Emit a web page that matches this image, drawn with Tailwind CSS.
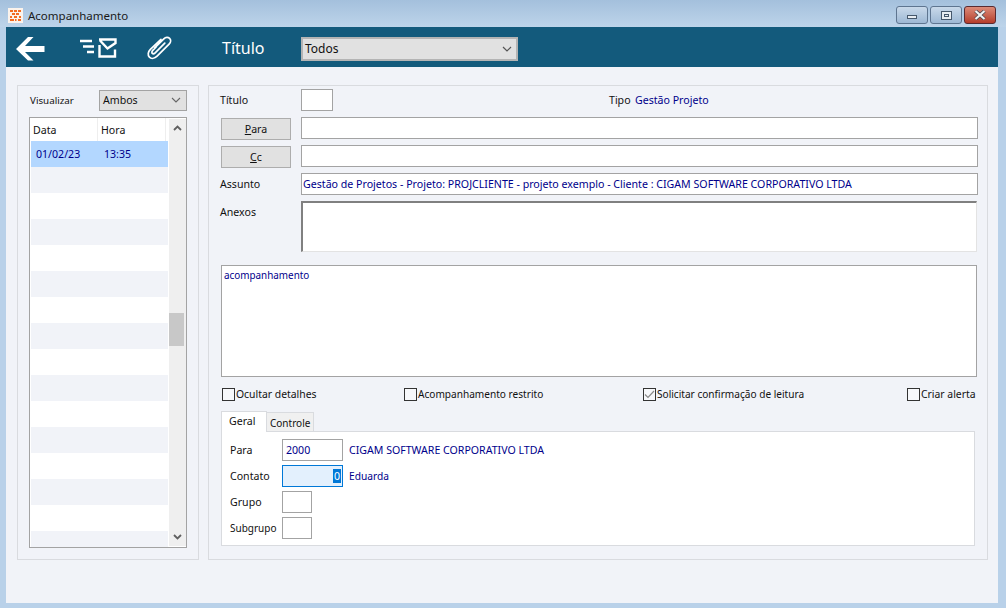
<!DOCTYPE html>
<html lang="pt-BR">
<head>
    <meta charset="UTF-8">
    <title>Acompanhamento</title>
    <script src="https://cdn.jsdelivr.net/npm/@tailwindcss/browser@4"></script>
</head>
<body class="w-[1006px] h-[608px] overflow-hidden bg-[#b9d1e9] font-['Noto_Sans','Open_Sans',sans-serif] text-[10.6px] leading-[14px] text-[#111] whitespace-nowrap">
    <!-- Title bar -->
    <div class="h-[27px] flex items-center bg-gradient-to-b from-[#a4c0dc] to-[#bdd4ea] pl-[8px] pr-[10px]">
        <div class="w-[15px] h-[15px] mt-[3px] bg-[#fbf3ec] flex items-center justify-center">
            <svg width="11" height="11" viewBox="0 0 11 11" fill="#f26b21"><path d="M0 0h3v2H0zM4 0h3v2H4zM8 0h3v2H8zM2 3h3v2H2zM6 3h3v2H6zM0 6h2v2H0zM4 6h3v2H4zM9 6h2v2H9zM0 9h4v2H0zM5 9h1.500v2H5zM8 9h3v2H8z"/></svg>
        </div>
        <span class="ml-[5px] mt-[4px] text-[11.5px] text-[#1a1a1a]">Acompanhamento</span>
        <div class="ml-auto flex gap-[2px] mt-[3px]">
            <div class="w-[32px] h-[18px] rounded-[3px] border border-[#5e7590] bg-gradient-to-b from-[#c9d9ea] to-[#9db8d4] flex items-center justify-center">
                <div class="w-[10px] h-[4px] mt-[3px] bg-[#e8edf2] border border-[#46586c]"></div>
            </div>
            <div class="w-[32px] h-[18px] rounded-[3px] border border-[#5e7590] bg-gradient-to-b from-[#c9d9ea] to-[#9db8d4] flex items-center justify-center">
                <div class="w-[11px] h-[9px] bg-[#e8edf2] border border-[#46586c] flex items-center justify-center"><div class="w-[5px] h-[3px] border border-[#46586c]"></div></div>
            </div>
            <div class="w-[32px] h-[18px] rounded-[3px] border border-[#5a2a30] bg-gradient-to-b from-[#dc8a78] to-[#b43c2a] flex items-center justify-center">
                <svg width="12" height="10" viewBox="0 0 12 10"><path d="M1.500 1 10.500 9M10.500 1 1.500 9" stroke="#47474f" stroke-width="3.600"/><path d="M1.500 1 10.500 9M10.500 1 1.500 9" stroke="#f2f2f2" stroke-width="2.200"/></svg>
            </div>
        </div>
    </div>

    <!-- Window client area -->
    <div class="ml-[6px] w-[992px] h-[576px] bg-[#f1f3f8] flex flex-col">
        <!-- Toolbar -->
        <div class="h-[40px] shrink-0 bg-[#135a7c] flex items-center">
            <svg class="ml-[10px] mt-[3px]" width="29" height="24" viewBox="0 0 29 24"><path d="M0 12 12 0h5.500L9 9h19.500v6H9l8.500 8.500H12z" fill="#fff"/></svg>
            <svg class="ml-[34px] mt-[2px]" width="38" height="20" viewBox="0 0 38 20" fill="none"><path d="M1 3h12M4 8.500h11M8 14h7" stroke="#fff" stroke-width="2.400"/><path d="M20.500 7v11.500h15.500v-7M20 1.500h16.500v3.500L28.500 10.500 21 2.500" stroke="#fff" stroke-width="2.400"/></svg>
            <svg class="ml-[29px]" width="27" height="25" viewBox="0 0 27 26" fill="none"><path d="M8.500 13.500 18 4c2-2 4.500-2 6-.5s1.500 4-.5 6L11 22c-2.500 2.500-6 3-8 1s-1.500-5.500 1-8L15 4.500M19 8.500 9 18.500c-1 1-2.300 1.300-3 .6s-.5-2 .5-3L10 12.500" stroke="#fff" stroke-width="1.800" stroke-linecap="round"/></svg>
            <span class="ml-[49px] w-[79px] text-white text-[16px] leading-[20px] mt-[2px]">Título</span>
            <div class="w-[217px] h-[24px] mt-[3px] bg-[#e1e1e1] border-2 border-[#b4b4b4] flex items-center justify-between pl-[2px] pr-[4px] text-[12px] text-[#111]">
                <span class="mt-[1px]">Todos</span>
                <svg width="10" height="6" viewBox="0 0 10 6" fill="none"><path d="M1 1l4 4 4-4" stroke="#555" stroke-width="1.200"/></svg>
            </div>
        </div>

        <!-- Panels -->
        <div class="flex mt-[18px] ml-[11px] gap-[9px]">
            <!-- Left panel -->
            <div class="w-[182px] h-[475px] border border-[#d9dbdf] pl-[11px] pt-[3px]">
                <div class="flex items-center h-[22px]">
                    <span class="w-[70px] mt-[1px] pl-[1px] text-[9.8px]">Visualizar</span>
                    <div class="w-[88px] h-[21px] bg-[#e1e1e1] border border-[#a3a3a3] flex items-center justify-between pl-[3px] pr-[5px]">
                        <span>Ambos</span>
                        <svg width="10" height="6" viewBox="0 0 10 6" fill="none"><path d="M1 1l4 4 4-4" stroke="#666" stroke-width="1.100"/></svg>
                    </div>
                </div>
                <div class="mt-[6px] w-[158px] h-[431px] border border-[#a3a3a3] bg-white flex">
                    <div class="w-[137px] ml-[1px] overflow-hidden">
                        <div class="h-[23px] flex items-center">
                            <span class="w-[67px] pl-[2px] border-r border-[#eeeeee] h-full flex items-center">Data</span>
                            <span class="w-[68px] pl-[3px] border-r border-[#eeeeee] h-full flex items-center">Hora</span>
                        </div>
                        <div class="h-[26px] bg-[#b3d7ff] flex items-center text-[#00008b]">
                            <span class="w-[69px] pl-[5px]">01/02/23</span>
                            <span class="pl-[4px]">13:35</span>
                        </div>
                        <div class="h-[26px] bg-[#f1f3f8]"></div>
                        <div class="h-[26px]"></div>
                        <div class="h-[26px] bg-[#f1f3f8]"></div>
                        <div class="h-[26px]"></div>
                        <div class="h-[26px] bg-[#f1f3f8]"></div>
                        <div class="h-[26px]"></div>
                        <div class="h-[26px] bg-[#f1f3f8]"></div>
                        <div class="h-[26px]"></div>
                        <div class="h-[26px] bg-[#f1f3f8]"></div>
                        <div class="h-[26px]"></div>
                        <div class="h-[26px] bg-[#f1f3f8]"></div>
                        <div class="h-[26px]"></div>
                        <div class="h-[26px] bg-[#f1f3f8]"></div>
                        <div class="h-[26px]"></div>
                        <div class="h-[26px] bg-[#f1f3f8]"></div>
                    </div>
                    <div class="ml-[1px] w-[17px] my-[1px] bg-[#efefef] flex flex-col items-center">
                        <svg class="mt-[6px] shrink-0" width="9" height="6" viewBox="0 0 9 6" fill="none"><path d="M1 5l3.500-3.500L8 5" stroke="#606060" stroke-width="1.800"/></svg>
                        <div class="mt-[182px] w-[15px] mr-[2px] h-[33px] bg-[#c8c8c8] shrink-0"></div>
                        <svg class="mt-auto mb-[6px] shrink-0" width="9" height="6" viewBox="0 0 9 6" fill="none"><path d="M1 1l3.500 3.500L8 1" stroke="#606060" stroke-width="1.800"/></svg>
                    </div>
                </div>
            </div>

            <!-- Right panel -->
            <div class="w-[780px] h-[475px] border border-[#d9dbdf] pl-[11px] pt-[3px]">
                <div class="flex items-center h-[22px]">
                    <span class="w-[81px]">Título</span>
                    <div class="w-[32px] h-[22px] bg-white border border-[#a3a3a3]"></div>
                    <span class="ml-[276px] w-[26px]">Tipo</span>
                    <span class="text-[#00008b]">Gestão Projeto</span>
                </div>
                <div class="mt-[6px] flex items-start h-[22px]">
                    <div class="ml-[1px] mt-[1px] w-[70px] h-[22px] bg-[#e1e1e1] border border-[#adadad] flex items-center justify-center"><span><u>P</u>ara</span></div>
                    <div class="ml-[10px] w-[677px] h-[22px] bg-white border border-[#a3a3a3]"></div>
                </div>
                <div class="mt-[6px] flex items-start h-[22px]">
                    <div class="ml-[1px] mt-[1px] w-[70px] h-[22px] bg-[#e1e1e1] border border-[#adadad] flex items-center justify-center"><span><u>C</u>c</span></div>
                    <div class="ml-[10px] w-[677px] h-[22px] bg-white border border-[#a3a3a3]"></div>
                </div>
                <div class="mt-[6px] flex items-center h-[22px]">
                    <span class="w-[81px] mt-[-1px]">Assunto</span>
                    <div class="w-[677px] h-[22px] bg-white border border-[#a3a3a3] pl-[1px] flex items-center text-[#00008b] text-[10.64px]">Gestão de Projetos - Projeto: PROJCLIENTE - projeto exemplo - Cliente : CIGAM SOFTWARE CORPORATIVO LTDA</div>
                </div>
                <div class="mt-[6px] flex items-start h-[51px]">
                    <span class="w-[81px] mt-[4px]">Anexos</span>
                    <div class="w-[676px] h-[51px] bg-white border-t-2 border-l-2 border-[#808080] border-b border-r border-b-[#e3e3e3] border-r-[#e3e3e3]"></div>
                </div>
                <div class="mt-[13px] ml-[1px] w-[756px] h-[112px] bg-white border border-[#a3a3a3] pl-[2px] pt-[2px] text-[#00008b] text-[9.9px]">acompanhamento</div>
                <div class="mt-[10px] flex items-center h-[14px] text-[10.1px]">
                    <div class="ml-[2px] w-[182px] flex items-center gap-[1px]">
                        <div class="w-[13px] h-[13px] border border-[#333] bg-[#f7f8fb]"></div>
                        <span class="text-[10.4px]">Ocultar detalhes</span>
                    </div>
                    <div class="w-[239px] flex items-center gap-[1px]">
                        <div class="w-[13px] h-[13px] border border-[#333] bg-[#f7f8fb]"></div>
                        <span>Acompanhamento restrito</span>
                    </div>
                    <div class="w-[264px] flex items-center gap-[1px]">
                        <div class="w-[13px] h-[13px] border border-[#333] bg-[#f7f8fb] flex items-center justify-center">
                            <svg width="11" height="9" viewBox="0 0 11 9" fill="none"><path d="M1 4.500l3 3 6-6.500" stroke="#8a8a8a" stroke-width="1.200"/></svg>
                        </div>
                        <span>Solicitar confirmação de leitura</span>
                    </div>
                    <div class="flex items-center gap-[1px]">
                        <div class="w-[13px] h-[13px] border border-[#333] bg-[#f7f8fb]"></div>
                        <span class="text-[10.4px]">Criar alerta</span>
                    </div>
                </div>
                <!-- Tabs -->
                <div class="mt-[10px] ml-[1px] flex items-end h-[20px]">
                    <div class="w-[46px] h-[21px] bg-white border border-[#d9dbdf] border-b-0 pl-[7px] pt-[2px] z-10 mb-[-1px]">Geral</div>
                    <div class="w-[47px] h-[19px] bg-[#f0f0f0] border border-[#d9dbdf] border-l-0 border-b-0 pl-[3px] pt-[3px] text-[10px]">Controle</div>
                </div>
                <div class="ml-[1px] w-[754px] h-[115px] bg-white border border-[#d9dbdf] pl-[8px] pt-[7px]">
                    <div class="flex items-center h-[22px]">
                        <span class="w-[52px]">Para</span>
                        <div class="w-[61px] h-[22px] bg-white border border-[#a3a3a3] pl-[3px] flex items-center text-[#00008b]">2000</div>
                        <span class="ml-[6px] text-[#00008b]">CIGAM SOFTWARE CORPORATIVO LTDA</span>
                    </div>
                    <div class="mt-[4px] flex items-center h-[22px]">
                        <span class="w-[52px]">Contato</span>
                        <div class="w-[61px] h-[22px] bg-[#e3f0fd] border border-[#0078d7] pr-[1px] flex items-center justify-end text-white"><span class="bg-[#0078d7] leading-[14px] px-[1px]">0</span></div>
                        <span class="ml-[6px] text-[#00008b] text-[10.2px]">Eduarda</span>
                    </div>
                    <div class="mt-[4px] flex items-center h-[22px]">
                        <span class="w-[52px]">Grupo</span>
                        <div class="w-[30px] h-[22px] bg-white border border-[#a3a3a3]"></div>
                    </div>
                    <div class="mt-[4px] flex items-center h-[22px]">
                        <span class="w-[52px] text-[10px]">Subgrupo</span>
                        <div class="w-[30px] h-[22px] bg-white border border-[#a3a3a3]"></div>
                    </div>
                </div>
            </div>
        </div>
    </div>
</body>
</html>
